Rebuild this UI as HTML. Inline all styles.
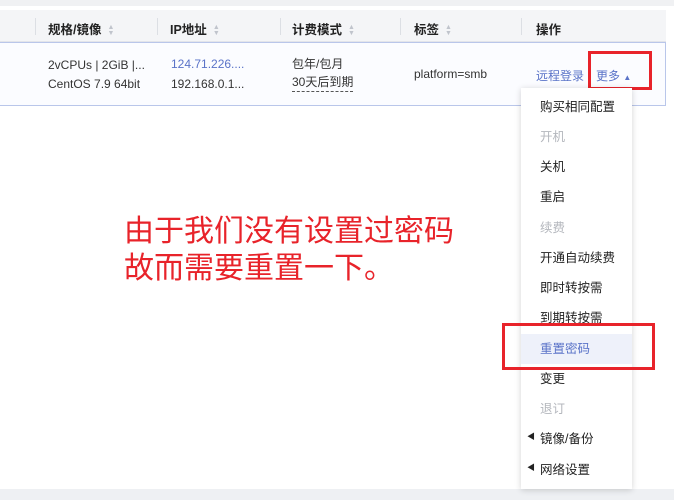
<!DOCTYPE html>
<html><head><meta charset="utf-8"><style>
*{margin:0;padding:0;box-sizing:border-box}
body{width:674px;height:500px;background:#fff;position:relative;overflow:hidden;font-family:"Liberation Sans","Noto Sans CJK SC",sans-serif;color:#333;font-size:12px}
.a{position:absolute;white-space:nowrap}
.hd{position:absolute;left:0;top:10px;width:666px;height:32px;background:#f4f5f7;border-bottom:1px solid #e3e5ea}
.sep{position:absolute;top:8px;width:1px;height:17px;background:#dcdfe4}
.th{position:absolute;top:9px;font-weight:bold;color:#222;font-size:12.5px}
.sort{display:inline-block;margin-left:6px;color:#c0c4cc;font-size:7px;line-height:6px;vertical-align:middle}
.row{position:absolute;left:-2px;top:42px;width:668px;height:64px;border:1px solid #b9c6ea;background:#fbfcff}
.menu{position:absolute;left:521px;top:88px;width:111px;height:401px;background:#fff;box-shadow:0 1px 6px rgba(0,0,0,.18)}
.mi{position:absolute;left:19px;font-size:12.5px;color:#222}
.dis{color:#b4b7bd}
.red{position:absolute;border:3px solid #e8232a}
</style></head><body>
<div class="a" style="left:0;top:0;width:674px;height:6px;background:#f0f1f3"></div>
<div class="hd">
<div class="sep" style="left:35px"></div><div class="sep" style="left:157px"></div><div class="sep" style="left:280px"></div><div class="sep" style="left:400px"></div><div class="sep" style="left:521px"></div>
<div class="th" style="left:48px">规格/镜像<span class="sort">▲<br>▼</span></div>
<div class="th" style="left:170px">IP地址<span class="sort">▲<br>▼</span></div>
<div class="th" style="left:292px">计费模式<span class="sort">▲<br>▼</span></div>
<div class="th" style="left:414px">标签<span class="sort">▲<br>▼</span></div>
<div class="th" style="left:536px">操作</div>
</div>
<div class="row"></div>
<div class="a" style="left:48px;top:58px">2vCPUs | 2GiB |...</div>
<div class="a" style="left:48px;top:77px">CentOS 7.9 64bit</div>
<div class="a" style="left:171px;top:57px;color:#5a73c8">124.71.226....</div>
<div class="a" style="left:171px;top:77px">192.168.0.1...</div>
<div class="a" style="left:292px;top:55px">包年/包月</div>
<div class="a" style="left:292px;top:73px;border-bottom:1px dashed #555;padding-bottom:1px">30天后到期</div>
<div class="a" style="left:414px;top:67px">platform=smb</div>
<div class="a" style="left:536px;top:67px;color:#5a73c8">远程登录</div>
<div class="a" style="left:596px;top:67px;color:#5a73c8">更多 <span style="font-size:8px">▲</span></div>
<div class="red" style="left:588px;top:51px;width:64px;height:39px"></div>
<div class="a" style="left:0;top:489px;width:674px;height:11px;background:#eef0f3"></div>
<div class="menu">
<div class="a" style="left:0;top:246px;width:111px;height:30px;background:#eef1fa"></div>
<div class="mi" style="top:8px">购买相同配置</div>
<div class="mi dis" style="top:38px">开机</div>
<div class="mi" style="top:68px">关机</div>
<div class="mi" style="top:98px">重启</div>
<div class="mi dis" style="top:129px">续费</div>
<div class="mi" style="top:159px">开通自动续费</div>
<div class="mi" style="top:189px">即时转按需</div>
<div class="mi" style="top:219px">到期转按需</div>
<div class="mi" style="top:250px;color:#5a73c8">重置密码</div>
<div class="mi" style="top:280px">变更</div>
<div class="mi dis" style="top:310px">退订</div>
<div class="mi" style="top:340px"><span style="position:absolute;left:-13px;top:3px;font-size:8px">◀</span>镜像/备份</div>
<div class="mi" style="top:371px"><span style="position:absolute;left:-13px;top:3px;font-size:8px">◀</span>网络设置</div>
</div>
<div class="red" style="left:502px;top:323px;width:153px;height:47px"></div>
<div class="a" style="left:124px;top:213px;font-size:30px;line-height:37px;color:#e8232a">由于我们没有设置过密码<br>故而需要重置一下。</div>
</body></html>
